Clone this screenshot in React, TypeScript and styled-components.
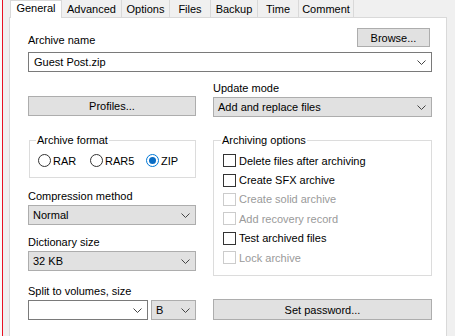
import React from "react";
import styled, { createGlobalStyle } from "styled-components";

const GlobalStyle = createGlobalStyle`
  html, body {
    margin: 0;
    padding: 0;
    background: #f0f0f0;
  }
  body {
    font-family: "Liberation Sans", Arial, sans-serif;
    font-size: 11px;
    color: #000;
  }
`;

const Window = styled.div`
  display: flex;
  width: 455px;
  height: 336px;
  overflow: hidden;
  background: #f0f0f0;
`;

const Edge = styled.div`
  flex: none;
  width: 2px;
  background: #fafafa;
  border-right: 1px solid #e81123;
`;

const Dialog = styled.div`
  flex: none;
  display: flex;
  flex-direction: column;
  padding-left: 6px;
`;

const TabStrip = styled.div`
  display: flex;
  height: 17px;
  padding-left: 1px;
  position: relative;
  z-index: 1;
`;

const Tab = styled.div<{ $w: number; $active?: boolean; $last?: boolean }>`
  box-sizing: border-box;
  flex: none;
  width: ${(p) => p.$w}px;
  height: ${(p) => (p.$active ? 18 : 17)}px;
  padding-top: ${(p) => (p.$active ? 0 : 2)}px;
  line-height: 14px;
  text-align: center;
  white-space: nowrap;
  background: ${(p) => (p.$active ? "#fff" : "#f0f0f0")};
  border-left: 1px solid #d9d9d9;
  border-right: ${(p) => (p.$last || p.$active ? "1px solid #d9d9d9" : "none")};
  border-top: ${(p) => (p.$active ? "1px solid #d9d9d9" : "none")};
  margin-right: ${(p) => (p.$active ? -1 : 0)}px;
  position: relative;
  z-index: ${(p) => (p.$active ? 1 : 0)};
`;

const Panel = styled.div`
  box-sizing: border-box;
  width: 438px;
  flex: 1;
  background: #fff;
  border: 1px solid #d9d9d9;
  border-bottom: none;
  padding: 10px 14px 0 18px;
`;

const HeaderRow = styled.div`
  display: flex;
  justify-content: space-between;
  align-items: flex-end;
  height: 19px;
`;

const Label = styled.div`
  line-height: 14px;
  white-space: nowrap;
`;

const FieldLabel = styled(Label)<{ $top?: number }>`
  margin-top: ${(p) => p.$top ?? 0}px;
  margin-bottom: 2px;
`;

const Button = styled.div<{ $w?: number; $h?: number; $top?: number; $auto?: boolean }>`
  box-sizing: border-box;
  display: flex;
  align-items: center;
  justify-content: center;
  width: ${(p) => (p.$w ? `${p.$w}px` : "auto")};
  height: ${(p) => p.$h ?? 20}px;
  margin-top: ${(p) => (p.$auto ? "auto" : `${p.$top ?? 0}px`)};
  background: #e1e1e1;
  border: 1px solid #adadad;
  white-space: nowrap;
`;

const BrowseButton = styled(Button)`
  margin-right: 2px;
`;

const Select = styled.div<{ $white?: boolean; $w?: number; $top?: number }>`
  box-sizing: border-box;
  display: flex;
  align-items: center;
  justify-content: space-between;
  width: ${(p) => (p.$w ? `${p.$w}px` : "auto")};
  height: 20px;
  margin-top: ${(p) => p.$top ?? 0}px;
  padding: 0 5px 0 ${(p) => (p.$white ? 5 : 4)}px;
  background: ${(p) => (p.$white ? "#fff" : "#e1e1e1")};
  border: 1px solid ${(p) => (p.$white ? "#7a7a7a" : "#adadad")};
  white-space: nowrap;
`;

const Columns = styled.div`
  display: grid;
  grid-template-columns: 168px 219px;
  column-gap: 17px;
  margin-top: 9px;
`;

const Column = styled.div`
  display: flex;
  flex-direction: column;
`;

const Group = styled.fieldset<{ $left?: number; $top: number; $pad: number; $bottom: number }>`
  box-sizing: border-box;
  min-width: 0;
  margin: ${(p) => p.$top}px 0 0 ${(p) => p.$left ?? 0}px;
  padding: 4px 0 ${(p) => p.$bottom}px ${(p) => p.$pad}px;
  border: 1px solid #dcdcdc;
`;

const Legend = styled.legend`
  padding: 0 1px;
  margin-left: -2px;
  line-height: 13px;
  font-size: 11px;
`;

const RadioRow = styled.div`
  display: grid;
  grid-template-columns: 52px 56px auto;
  align-items: center;
  height: 19.4px;
`;

const Option = styled.div<{ $disabled?: boolean }>`
  display: flex;
  align-items: center;
  height: 19.4px;
  white-space: nowrap;
  color: ${(p) => (p.$disabled ? "#9a9a9a" : "#000")};
`;

const RadioMark = styled.span<{ $checked?: boolean }>`
  box-sizing: border-box;
  flex: none;
  width: 13px;
  height: 13px;
  margin-right: 2px;
  border-radius: 50%;
  background: #fff;
  border: 1px solid ${(p) => (p.$checked ? "#0078d7" : "#333")};
  display: flex;
  align-items: center;
  justify-content: center;

  &::after {
    content: "";
    display: ${(p) => (p.$checked ? "block" : "none")};
    width: 7px;
    height: 7px;
    border-radius: 50%;
    background: #0a6cc4;
  }
`;

const CheckMark = styled.span<{ $disabled?: boolean }>`
  box-sizing: border-box;
  flex: none;
  width: 13px;
  height: 13px;
  margin-right: 3px;
  background: #fff;
  border: 1px solid ${(p) => (p.$disabled ? "#cccccc" : "#333")};
`;

const SplitRow = styled.div`
  display: flex;
  gap: 3px;
`;

const Chevron = () => (
  <svg width="9" height="5" viewBox="0 0 9 5" style={{ flex: "none" }}>
    <polyline points="0.5,0.5 4.5,4.5 8.5,0.5" fill="none" stroke="#444" strokeWidth="1" />
  </svg>
);

const Dropdown = ({
  value,
  white,
  w,
  top,
}: {
  value: string;
  white?: boolean;
  w?: number;
  top?: number;
}) => (
  <Select $white={white} $w={w} $top={top}>
    <span>{value}</span>
    <Chevron />
  </Select>
);

const Radio = ({ label, checked }: { label: string; checked?: boolean }) => (
  <Option>
    <RadioMark $checked={checked} />
    {label}
  </Option>
);

const Check = ({ label, disabled }: { label: string; disabled?: boolean }) => (
  <Option $disabled={disabled}>
    <CheckMark $disabled={disabled} />
    {label}
  </Option>
);

const tabs = [
  { name: "General", w: 52 },
  { name: "Advanced", w: 60 },
  { name: "Options", w: 48 },
  { name: "Files", w: 41 },
  { name: "Backup", w: 47 },
  { name: "Time", w: 41 },
  { name: "Comment", w: 56 },
];

const archivingOptions = [
  { label: "Delete files after archiving" },
  { label: "Create SFX archive" },
  { label: "Create solid archive", disabled: true },
  { label: "Add recovery record", disabled: true },
  { label: "Test archived files" },
  { label: "Lock archive", disabled: true },
];

export default function App() {
  return (
    <>
      <GlobalStyle />
      <Window>
        <Edge />
        <Dialog>
          <TabStrip>
            {tabs.map((t, i) => (
              <Tab key={t.name} $w={t.w} $active={i === 0} $last={i === tabs.length - 1}>
                {t.name}
              </Tab>
            ))}
          </TabStrip>
          <Panel>
            <HeaderRow>
              <Label>Archive name</Label>
              <BrowseButton $w={73} $h={19}>
                Browse...
              </BrowseButton>
            </HeaderRow>
            <Dropdown value="Guest Post.zip" white top={5} />

            <Columns>
              <Column>
                <Button $top={15}>Profiles...</Button>
                <Group $left={1} $top={18} $pad={8} $bottom={7}>
                  <Legend>Archive format</Legend>
                  <RadioRow>
                    <Radio label="RAR" />
                    <Radio label="RAR5" />
                    <Radio label="ZIP" checked />
                  </RadioRow>
                </Group>
                <FieldLabel $top={11}>Compression method</FieldLabel>
                <Dropdown value="Normal" />
                <FieldLabel $top={10}>Dictionary size</FieldLabel>
                <Dropdown value="32 KB" />
                <FieldLabel $top={13}>Split to volumes, size</FieldLabel>
                <SplitRow>
                  <Dropdown value="" white w={120} />
                  <Dropdown value="B" w={45} />
                </SplitRow>
              </Column>

              <Column>
                <FieldLabel>Update mode</FieldLabel>
                <Dropdown value="Add and replace files" />
                <Group $top={17} $pad={9} $bottom={8}>
                  <Legend>Archiving options</Legend>
                  {archivingOptions.map((o) => (
                    <Check key={o.label} label={o.label} disabled={o.disabled} />
                  ))}
                </Group>
                <Button $auto $h={21}>
                  Set password...
                </Button>
              </Column>
            </Columns>
          </Panel>
        </Dialog>
      </Window>
    </>
  );
}
